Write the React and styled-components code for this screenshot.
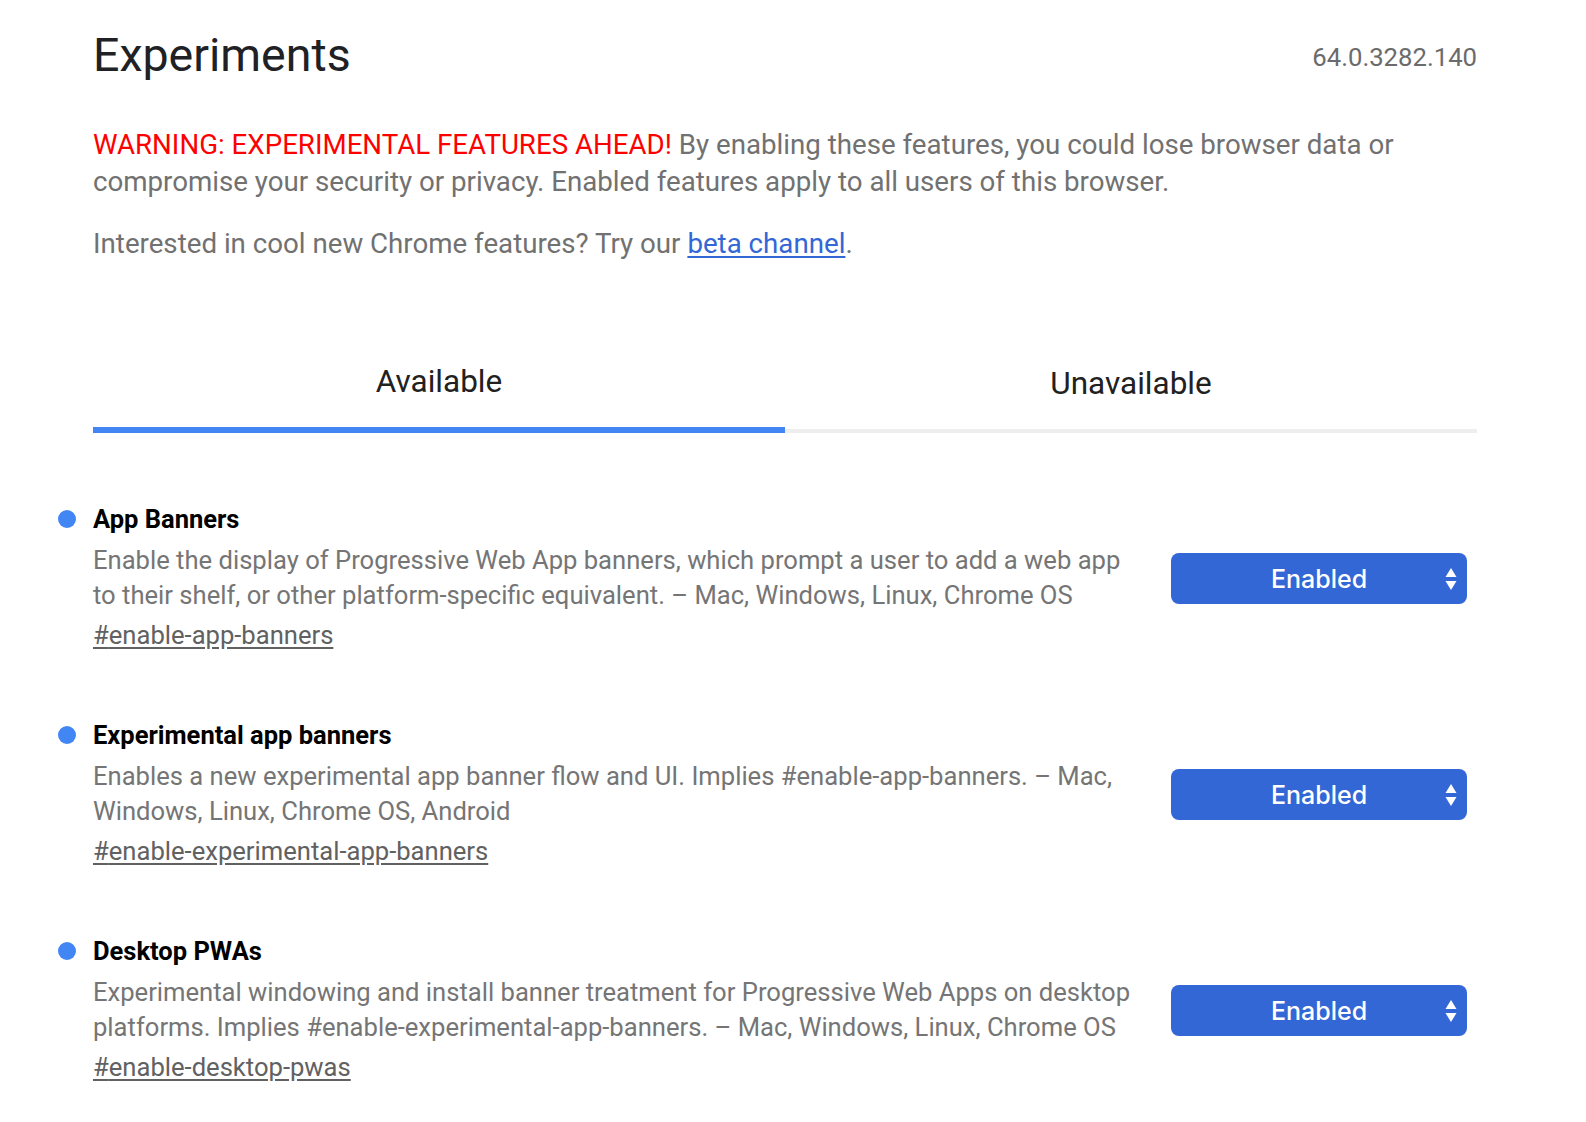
import styled, { createGlobalStyle } from "styled-components";

const GlobalStyle = createGlobalStyle`
  html, body {
    margin: 0;
    padding: 0;
    background: #fff;
    height: 100%;
    overflow: hidden;
  }
  body {
    font-family: Roboto, "Noto Sans", sans-serif;
    -webkit-font-smoothing: antialiased;
  }
`;

const experiments = [
  {
    id: "enable-app-banners",
    name: "App Banners",
    description:
      "Enable the display of Progressive Web App banners, which prompt a user to add a web app to their shelf, or other platform-specific equivalent. – Mac, Windows, Linux, Chrome OS",
  },
  {
    id: "enable-experimental-app-banners",
    name: "Experimental app banners",
    description:
      "Enables a new experimental app banner flow and UI. Implies #enable-app-banners. – Mac, Windows, Linux, Chrome OS, Android",
  },
  {
    id: "enable-desktop-pwas",
    name: "Desktop PWAs",
    description:
      "Experimental windowing and install banner treatment for Progressive Web Apps on desktop platforms. Implies #enable-experimental-app-banners. – Mac, Windows, Linux, Chrome OS",
  },
];

export default function App() {
  return (
    <>
      <GlobalStyle />
      <Page>
        <Header>
          <H1>Experiments</H1>
          <Version>64.0.3282.140</Version>
        </Header>
        <Blurb>
          <Warning>WARNING: EXPERIMENTAL FEATURES AHEAD!</Warning> By enabling
          these features, you could lose browser data or compromise your
          security or privacy. Enabled features apply to all users of this
          browser.
        </Blurb>
        <Blurb $top={25}>
          Interested in cool new Chrome features? Try our{" "}
          <BetaLink href="#">beta channel</BetaLink>.
        </Blurb>

        <Tabs>
          <Tab $active>Available</Tab>
          <Tab $low>Unavailable</Tab>
        </Tabs>

        <List>
          {experiments.map((exp) => (
            <Item key={exp.id}>
              <Dot />
              <ItemBody>
                <Title>{exp.name}</Title>
                <Description>{exp.description}</Description>
                <Permalink href={"#" + exp.id}>#{exp.id}</Permalink>
              </ItemBody>
              <Select>
                <span>Enabled</span>
                <Arrows viewBox="0 0 12 24" width="12" height="24">
                  <path d="M6 1 L11.5 10 H0.5 Z" fill="#fff" />
                  <path d="M6 23 L11.5 14 H0.5 Z" fill="#fff" />
                </Arrows>
              </Select>
            </Item>
          ))}
        </List>
      </Page>
    </>
  );
}

const Page = styled.div`
  width: 1384px;
  margin: 0 0 0 93px;
  padding-top: 25px;
`;

const Header = styled.div`
  display: flex;
  justify-content: space-between;
  align-items: flex-start;
`;

const H1 = styled.h1`
  margin: 0;
  font-size: 46.5px;
  font-weight: 400;
  line-height: 60px;
  color: #202124;
`;

const Version = styled.div`
  font-size: 25.7px;
  line-height: 30px;
  color: #6b6b6b;
  margin-top: 17px;
`;

const Blurb = styled.p`
  margin: ${({ $top }) => $top ?? 41}px 0 0;
  width: 1320px;
  font-size: 27.7px;
  line-height: 37px;
  color: #717171;
`;

const Warning = styled.span`
  color: #f00;
`;

const BetaLink = styled.a`
  color: #3367d6;
  text-decoration: underline;
  text-underline-offset: 3px;
`;

const Tabs = styled.div`
  display: flex;
  margin-top: 73px;
  border-bottom: 4px solid #eeeeee;
`;

const Tab = styled.div`
  flex: 1;
  text-align: center;
  font-size: 31.5px;
  line-height: 36px;
  color: #212121;
  padding: ${({ $low }) => ($low ? "31px 0 25px" : "29px 0 27px")};
  margin-bottom: -4px;
  border-bottom: 6px solid ${({ $active }) => ($active ? "#4285f4" : "transparent")};
`;

const List = styled.div`
  margin: 71px 0 0 -35px;
  display: flex;
  flex-direction: column;
  gap: 67px;
`;

const Item = styled.div`
  display: flex;
  align-items: center;
`;

const Dot = styled.span`
  align-self: flex-start;
  flex: none;
  width: 18px;
  height: 18px;
  border-radius: 50%;
  background: #4285f4;
  margin: 6px 17px 0 0;
`;

const ItemBody = styled.div`
  width: 1050px;
  flex: none;
`;

const Title = styled.div`
  font-size: 25.5px;
  font-weight: 700;
  line-height: 30px;
  color: #000;
`;

const Description = styled.div`
  margin-top: 9px;
  font-size: 25.6px;
  line-height: 35px;
  color: #757575;
`;

const Permalink = styled.a`
  display: inline-block;
  margin-top: 5px;
  font-size: 25.6px;
  line-height: 35px;
  color: #616161;
  text-decoration: underline;
  text-underline-offset: 3px;
`;

const Select = styled.div`
  margin-left: 28px;
  flex: none;
  width: 296px;
  height: 51px;
  border-radius: 8px;
  background: #3367d6;
  color: #fff;
  font-family: Inter, "Open Sans", sans-serif;
  font-size: 25px;
  font-weight: 500;
  display: flex;
  align-items: center;
  justify-content: center;
  position: relative;
`;

const Arrows = styled.svg`
  position: absolute;
  right: 10px;
  top: 14px;
`;
